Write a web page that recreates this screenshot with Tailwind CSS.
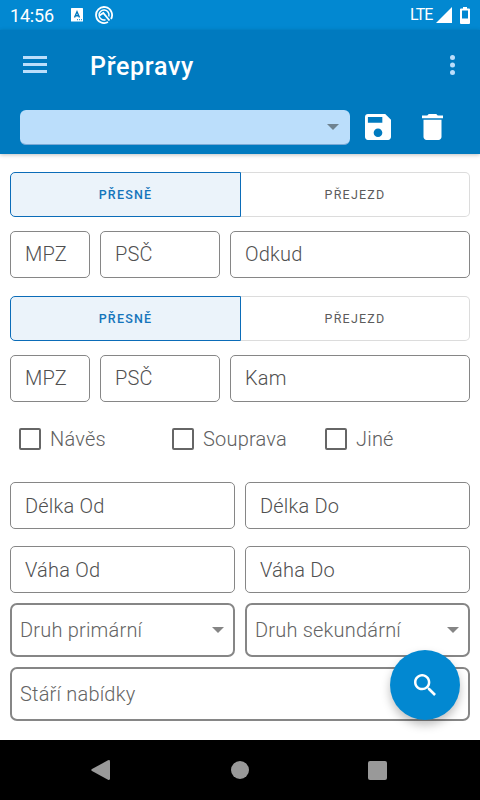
<!DOCTYPE html>
<html lang="cs">
<head>
    <meta charset="UTF-8">
    <meta name="viewport" content="width=device-width, initial-scale=1.0">
    <title>Přepravy</title>
    <script src="https://cdn.jsdelivr.net/npm/@tailwindcss/browser@4"></script>
</head>
<body class="bg-white font-[Roboto,sans-serif]">
    <div class="relative flex flex-col w-[480px] h-[800px] overflow-hidden">
        <!-- Status bar -->
        <div class="flex items-center h-[30px] shrink-0 bg-[#0288d1] text-white pl-[10px] pr-[10px]">
            <span class="w-[61px] text-[18px] tracking-[-0.2px] leading-[30px] pt-[1px]">14:56</span>
            <svg class="w-3 h-[14px]" viewBox="0 0 12 14">
                <rect width="12" height="13.5" rx="0.5" fill="#fff"/>
                <path d="M3.5 9.5 6 3.7l2.5 5.8M4.3 7.8h3.4" fill="none" stroke="#0277bd" stroke-width="1.4"/>
                <path d="M6 11.7h1M8 11.7h1M10 11.7h1" stroke="#0288d1"/>
            </svg>
            <svg class="w-[18px] h-[18px] ml-3" viewBox="0 0 18 18" fill="none" stroke="#fff">
                <path d="M13 16A8 8 0 1 1 16 13" stroke-width="1.8"/>
                <path d="M10.500 13.800A5 5 0 1 1 13.800 10.500" stroke-width="1.500"/>
                <path d="M4.500 9.500 8.300 7l6.200 7.500" stroke-width="1.900"/>
            </svg>
            <span class="ml-auto text-[16px] tracking-[-0.9px] leading-[30px]">LTE</span>
            <svg class="w-4 h-4 ml-[3px]" viewBox="0 0 16 16" fill="#fff"><path d="M16 0v16H0z"/></svg>
            <svg class="w-[10px] h-[17px] ml-[8.500px]" viewBox="0 0 10 17" fill="#fff">
                <path fill-rule="evenodd" d="M3 0h4v1.500h2q1 0 1 1V16q0 1-1 1H1q-1 0-1-1V2.500q0-1 1-1h2zM2 3.500v8h6v-8z"/>
            </svg>
        </div>

        <!-- App bar -->
        <header class="h-[124px] shrink-0 bg-[#007abf] shadow-[0_1px_4px_rgba(0,0,0,0.25)]">
            <div class="flex items-center h-[70px] pl-[23px] pr-[25px]">
                <div class="flex flex-col gap-1 w-6 -mt-[1px]">
                    <i class="h-[3px] bg-[#bbdefb]"></i>
                    <i class="h-[3px] bg-[#bbdefb]"></i>
                    <i class="h-[3px] bg-[#bbdefb]"></i>
                </div>
                <h1 class="ml-[43px] pt-[3px] text-[25px] leading-8 font-medium text-white tracking-[0.7px]">Přepravy</h1>
                <svg class="w-[5px] h-[20px] ml-auto" viewBox="0 0 5 20" fill="#bbdefb">
                    <circle cx="2.500" cy="2.500" r="2.500"/><circle cx="2.500" cy="10" r="2.500"/><circle cx="2.500" cy="17.500" r="2.500"/>
                </svg>
            </div>
            <div class="flex pl-5 pt-[10px]">
                <div class="flex items-center justify-end w-[330px] h-[35px] rounded-md bg-[#bbdefb] border-b border-[#79a9d5] pr-[11px]">
                    <svg class="w-3 h-[6px]" viewBox="0 0 12 6" fill="#6f8390"><path d="M0 0h12L6 6z"/></svg>
                </div>
                <svg class="w-[26px] h-[26px] ml-[14.5px] mt-1" viewBox="3 3 18 18" fill="#fff">
                    <path d="M17 3H5c-1.110 0-2 .9-2 2v14c0 1.100.89 2 2 2h14c1.100 0 2-.9 2-2V7l-4-4zm-5 16c-1.660 0-3-1.340-3-3s1.340-3 3-3 3 1.340 3 3-1.340 3-3 3zm3-10H5V5h10v4z"/>
                </svg>
                <svg class="w-[21px] h-[26px] ml-[31px] mt-1" viewBox="5 3 14 18" preserveAspectRatio="none" fill="#fff">
                    <path d="M6 19c0 1.100.9 2 2 2h8c1.100 0 2-.9 2-2V7H6v12zM19 4h-3.500l-1-1h-5l-1 1H5v2h14V4z"/>
                </svg>
            </div>
        </header>

        <main class="h-[586px] shrink-0 px-[10px] pt-[18px] text-[20px] text-[#505050] font-[350] tracking-[0.2px]">
            <!-- From -->
            <div class="flex h-[45px] text-[12.5px] tracking-[1.2px] font-medium">
                <div class="flex items-center justify-center w-[231px] rounded-l-[5px] border border-[#0b6cb8] bg-[#ebf3fa] text-[#1475bb] pt-[1px]">PŘESNĚ</div>
                <div class="flex items-center justify-center flex-1 rounded-r-[5px] border border-l-0 border-[#dcdcdc] text-[#5c5c5c] font-normal pt-[1px]">PŘEJEZD</div>
            </div>
            <div class="flex gap-[10px] mt-[14px] h-[47px]">
                <div class="flex items-center w-20 pl-[14px] pb-[1px] border border-[#868686] rounded-[5px]">MPZ</div>
                <div class="flex items-center w-[120px] pl-[14px] pb-[1px] border border-[#868686] rounded-[5px]">PSČ</div>
                <div class="flex items-center flex-1 pl-[14px] pb-[1px] border border-[#868686] rounded-[5px]">Odkud</div>
            </div>

            <!-- To -->
            <div class="flex h-[45px] mt-[18px] text-[12.5px] tracking-[1.2px] font-medium">
                <div class="flex items-center justify-center w-[231px] rounded-l-[5px] border border-[#0b6cb8] bg-[#ebf3fa] text-[#1475bb] pt-[1px]">PŘESNĚ</div>
                <div class="flex items-center justify-center flex-1 rounded-r-[5px] border border-l-0 border-[#dcdcdc] text-[#5c5c5c] font-normal pt-[1px]">PŘEJEZD</div>
            </div>
            <div class="flex gap-[10px] mt-[14px] h-[47px]">
                <div class="flex items-center w-20 pl-[14px] pb-[1px] border border-[#868686] rounded-[5px]">MPZ</div>
                <div class="flex items-center w-[120px] pl-[14px] pb-[1px] border border-[#868686] rounded-[5px]">PSČ</div>
                <div class="flex items-center flex-1 pl-[14px] pb-[1px] border border-[#868686] rounded-[5px]">Kam</div>
            </div>

            <!-- Vehicle type -->
            <div class="grid grid-cols-[153px_153px_1fr] mt-[22px] h-[30px] pl-[9px] text-[#606060]">
                <div class="flex items-center gap-[9px]"><i class="w-[22px] h-[22px] border-2 border-[#666] rounded-[2px]"></i>Návěs</div>
                <div class="flex items-center gap-[9px]"><i class="w-[22px] h-[22px] border-2 border-[#666] rounded-[2px]"></i>Souprava</div>
                <div class="flex items-center gap-[9px]"><i class="w-[22px] h-[22px] border-2 border-[#666] rounded-[2px]"></i>Jiné</div>
            </div>

            <!-- Length and weight -->
            <div class="grid grid-cols-2 gap-x-[10px] gap-y-[17px] mt-[28px]">
                <div class="flex items-center h-[47px] pl-[14px] border border-[#868686] rounded-[5px]">Délka Od</div>
                <div class="flex items-center h-[47px] pl-[14px] border border-[#868686] rounded-[5px]">Délka Do</div>
                <div class="flex items-center h-[47px] pl-[14px] border border-[#868686] rounded-[5px]">Váha Od</div>
                <div class="flex items-center h-[47px] pl-[14px] border border-[#868686] rounded-[5px]">Váha Do</div>
            </div>

            <!-- Selects -->
            <div class="grid grid-cols-2 gap-[10px] mt-[10px] text-[#646464]">
                <div class="flex items-center justify-between h-[54px] pl-2 pr-[9.500px] border-2 border-[#868686] rounded-[7px]">
                    Druh primární
                    <svg class="w-3 h-[6px]" viewBox="0 0 12 6" fill="#858585"><path d="M0 0h12L6 6z"/></svg>
                </div>
                <div class="flex items-center justify-between h-[54px] pl-2 pr-[9.500px] border-2 border-[#868686] rounded-[7px]">
                    Druh sekundární
                    <svg class="w-3 h-[6px]" viewBox="0 0 12 6" fill="#858585"><path d="M0 0h12L6 6z"/></svg>
                </div>
                <div class="col-span-2 flex items-center h-[54px] pl-2 border-2 border-[#868686] rounded-[7px]">Stáří nabídky</div>
            </div>
        </main>

        <!-- Search button -->
        <button class="absolute left-[390px] top-[650px] flex items-center justify-center w-[70px] h-[70px] pr-[1px] pb-[1px] rounded-full bg-[#0288d1] shadow-[0_5px_10px_rgba(0,0,0,0.25)]">
            <svg class="w-[22px] h-[22px]" viewBox="3 3 17.500 17.500" fill="#fff">
                <path d="M15.500 14h-.79l-.28-.27C15.410 12.590 16 11.110 16 9.500 16 5.910 13.090 3 9.500 3S3 5.910 3 9.500 5.910 16 9.500 16c1.610 0 3.090-.59 4.230-1.570l.27.28v.79l5 4.990L20.490 19l-4.990-5zm-6 0C7.010 14 5 11.990 5 9.500S7.010 5 9.500 5 14 7.010 14 9.500 11.990 14 9.500 14z"/>
            </svg>
        </button>

        <!-- Navigation bar -->
        <nav class="relative flex items-center h-[60px] shrink-0 bg-black pl-[91px]">
            <svg class="w-[19px] h-[20px]" viewBox="0 0 19 20" fill="#999"><path d="M1 9 17 .3Q19-.5 19 1.500v17q0 2-2 1.200L1 11q-1.500-1 0-2z"/></svg>
            <i class="w-[18px] h-[18px] ml-[121px] rounded-full bg-[#999]"></i>
            <i class="w-[19px] h-[19px] ml-[119px] rounded-[2px] bg-[#999]"></i>
        </nav>
    </div>
</body>
</html>
